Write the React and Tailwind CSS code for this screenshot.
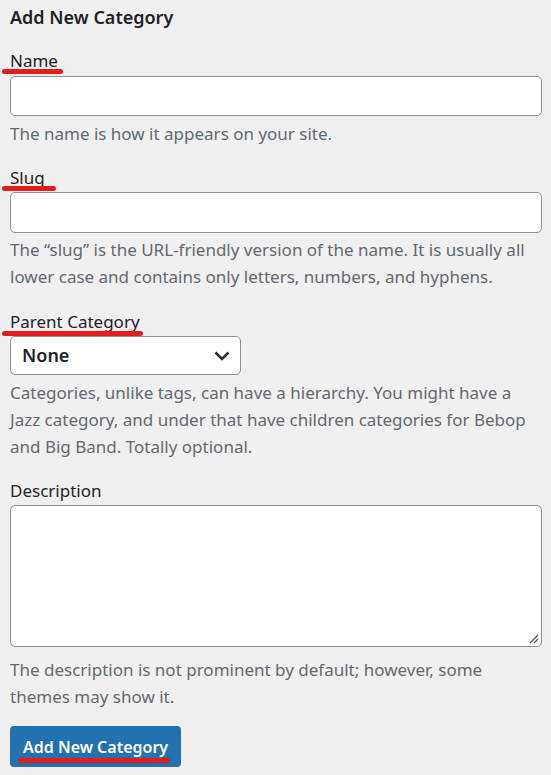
import React from 'react';

const font = { fontFamily: '"Noto Sans", "Open Sans", sans-serif' };

// red marker line drawn under some labels
const Mark = ({ className }) => (
  <span className={`absolute h-[5px] rounded-full bg-[#e51c1c] ${className}`} />
);

const Label = ({ children, mark }) => (
  <label className="relative block text-[17px] leading-[24px] text-[#1d2327]">
    {children}
    {mark && <Mark className={mark} />}
  </label>
);

const Help = ({ children, className = '' }) => (
  <p className={`text-[17px] leading-[27px] text-[#646970] ${className}`}>{children}</p>
);

export default function App() {
  return (
    <div className="min-h-[775px] w-[551px] bg-[#f0f0f1] pl-[10px] pr-[9px] pt-[5px]" style={font}>
      <h2 className="text-[18px] font-semibold leading-[24px] text-[#1d2327]">Add New Category</h2>

      <div className="mt-[20px]">
        <Label mark="left-[-8px] top-[20px] w-[61px]">Name</Label>
        <input type="text" className="mt-[3px] block h-[40px] w-full rounded-[5px] border border-[#8c8f94] bg-white" />
        <Help className="mt-[4px]">The name is how it appears on your site.</Help>
      </div>

      <div className="mt-[19px]">
        <Label mark="left-[-8px] top-[20px] w-[54px]">Slug</Label>
        <input type="text" className="mt-[2px] block h-[41px] w-full rounded-[5px] border border-[#8c8f94] bg-white" />
        <Help className="mt-[3px]">
          The “slug” is the URL-friendly version of the name. It is usually all lower case and contains only letters,
          numbers, and hyphens.
        </Help>
      </div>

      <div className="mt-[20px]">
        <Label mark="left-[-8px] top-[21px] w-[141px]">Parent Category</Label>
        <div className="relative mt-[2px] flex h-[39px] w-[231px] items-center rounded-[5px] border border-[#8c8f94] bg-white pl-[11px]">
          <span className="text-[18px] font-semibold text-[#1d2327]">None</span>
          <svg className="absolute right-[10px] top-[14px]" width="16" height="10" viewBox="0 0 16 10">
            <path d="M1.5 1.5 L8 8 L14.5 1.5" fill="none" stroke="#2c3338" strokeWidth="2.6" />
          </svg>
        </div>
        <Help className="mt-[4px]">
          Categories, unlike tags, can have a hierarchy. You might have a Jazz category, and under that have children
          categories for Bebop and Big Band. Totally optional.
        </Help>
      </div>

      <div className="mt-[19px]">
        <Label>Description</Label>
        <div className="relative mt-[2px] h-[142px] w-full rounded-[5px] border border-[#8c8f94] bg-white">
          <svg className="absolute bottom-[2px] right-[2px]" width="12" height="12" viewBox="0 0 12 12">
            <path d="M11 3 L3 11 M11 7 L7 11" stroke="#555" strokeWidth="1.3" />
          </svg>
        </div>
        <Help className="mt-[9px]">
          The description is not prominent by default; however, some themes may show it.
        </Help>
      </div>

      <button className="relative mt-[16px] flex h-[41px] items-center rounded-[4px] bg-[#2271b1] px-[13px] text-[16px] font-semibold text-white">
        Add New Category
        <Mark className="left-[8px] top-[32px] w-[152px]" />
      </button>
    </div>
  );
}
